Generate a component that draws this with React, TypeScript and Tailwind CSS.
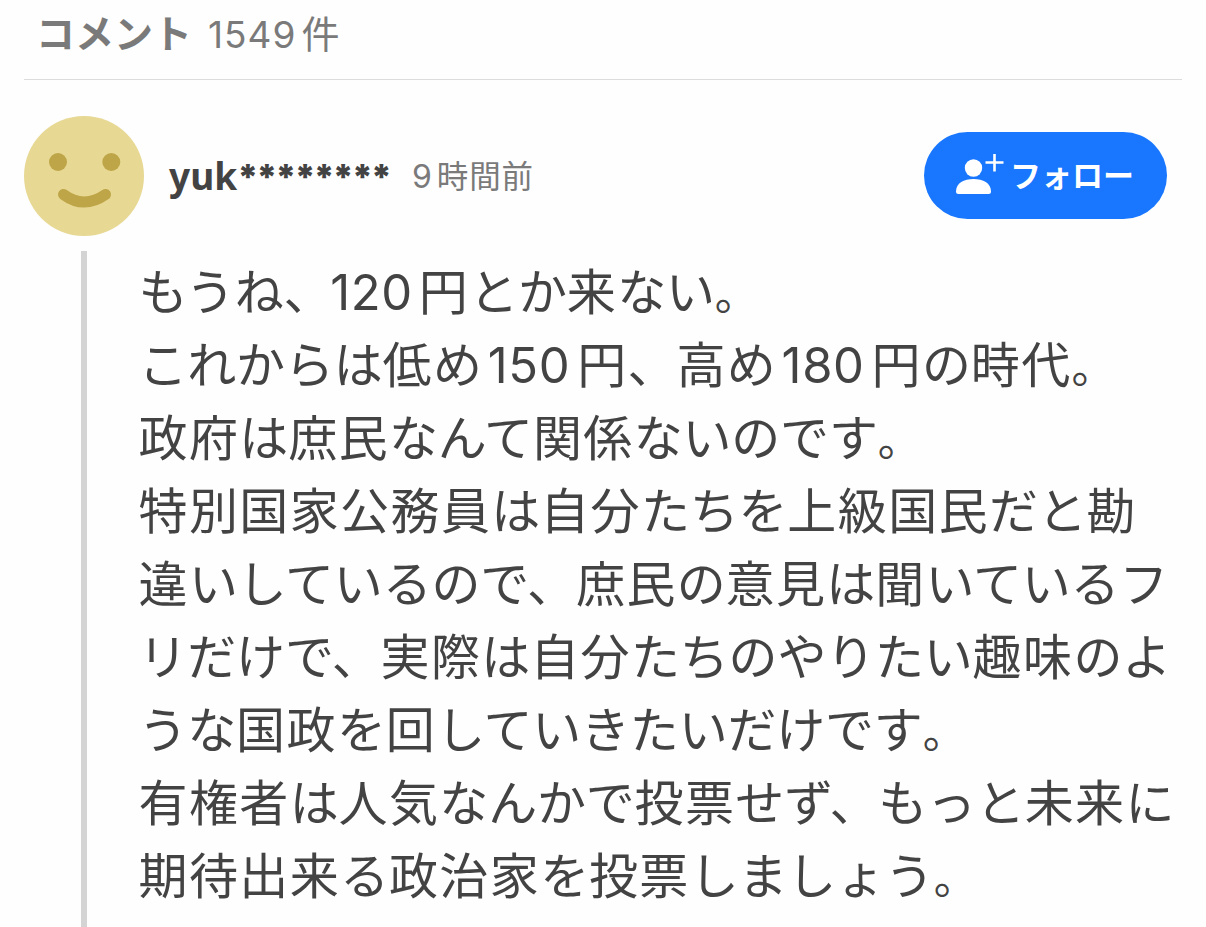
const lines = [
  'もうね、120円とか来ない。',
  'これからは低め150円、高め180円の時代。',
  '政府は庶民なんて関係ないのです。',
  '特別国家公務員は自分たちを上級国民だと勘',
  '違いしているので、庶民の意見は聞いているフ',
  'リだけで、実際は自分たちのやりたい趣味のよ',
  'うな国政を回していきたいだけです。',
  '有権者は人気なんかで投票せず、もっと未来に',
  '期待出来る政治家を投票しましょう。',
];

// Kanji are set slightly looser than kana, and numerals get a gap on both sides.
function Line({ text }: { text: string }) {
  const runs = text.match(/[0-9]+|[一-龥]+|。|[^0-9一-龥。]+/g) ?? [];
  return (
    <p className="whitespace-nowrap">
      {runs.map((run, i) => {
        if (/[0-9]/.test(run)) {
          const afterComma = runs[i - 1]?.endsWith('、');
          return (
            <span key={i} className={afterComma ? '-ml-[2px] mr-[6px] tracking-[0.6px]' : 'ml-[6px] mr-[7px] tracking-[0.6px]'}>
              {run}
            </span>
          );
        }
        if (run === '。') {
          return (
            <span key={i} className="text-[43px] leading-none">
              {run}
            </span>
          );
        }
        return (
          <span key={i} className={/[一-龥]/.test(run) ? 'tracking-[1.4px]' : 'tracking-[-0.2px]'}>
            {run}
          </span>
        );
      })}
    </p>
  );
}

function FollowIcon() {
  return (
    <svg className="h-[44px] w-[50px] shrink-0" viewBox="0 0 50 44" fill="#fff">
      <circle cx="18.5" cy="14" r="8.7" />
      <path d="M1 37.5C1 29 9 25 18.5 25S36 29 36 37.5Q36 40 33.5 40H3.5Q1 40 1 37.5Z" />
      <path d="M39.5 -0.5V17.5M30.5 8.5H48.5" fill="none" stroke="#fff" strokeWidth="2.6" />
    </svg>
  );
}

export default function App() {
  return (
    <main className="flex h-[927px] w-[1206px] flex-col overflow-hidden bg-[#fefefe] font-['Inter','Noto_Sans_CJK_JP',sans-serif] text-[#434343]">
      <header className="mx-6 flex h-20 shrink-0 items-center border-b border-[#dcdcdc] pb-[10px] pl-[12px] text-[#7a7a7a]">
        <h1 className="text-[39px] font-bold">コメント</h1>
        <span className="ml-[16px] text-[37px] tracking-[1px]">
          1549<span className="ml-[5px] text-[38px]">件</span>
        </span>
      </header>
      <section className="flex h-[171px] shrink-0 items-center pt-5 pr-[39px] pl-6">
        <svg className="size-[120px] shrink-0" viewBox="0 0 120 120">
          <circle cx="60" cy="60" r="60" fill="#e7d894" />
          <circle cx="34" cy="46" r="9" fill="#bea547" />
          <circle cx="87.3" cy="46" r="9" fill="#bea547" />
          <path d="M39.5 78.5Q60 93.5 81.5 78.5" fill="none" stroke="#bea547" strokeWidth="11" strokeLinecap="round" />
        </svg>
        <b className="ml-[25px] flex w-[219px] items-baseline pt-px font-['Noto_Sans',sans-serif] text-[37px] leading-[50px]">
          <span>yuk</span>
          <span className="font-['Inter',sans-serif] text-[35px] font-black tracking-[-2.2px]">********</span>
        </b>
        <span className="ml-[24px] pt-0.5 text-[32px] text-[#7a7a7a]">
          9<span className="ml-[5px] text-[31.5px] tracking-[0.8px]">時間前</span>
        </span>
        <button className="ml-auto flex h-[87px] w-[243px] items-center rounded-full bg-[#1876ff] pl-[31px] text-[31px] font-bold text-white">
          <FollowIcon />
          <span className="ml-[5px] pt-px">フォロー</span>
        </button>
      </section>
      <section className="flex grow pl-[81px]">
        <div className="w-1.5 bg-[#d4d4d4]" />
        <div className="ml-[51.5px] pt-[5px] text-[49px] leading-[73px]">
          {lines.map((text) => (
            <Line key={text} text={text} />
          ))}
        </div>
      </section>
    </main>
  );
}
